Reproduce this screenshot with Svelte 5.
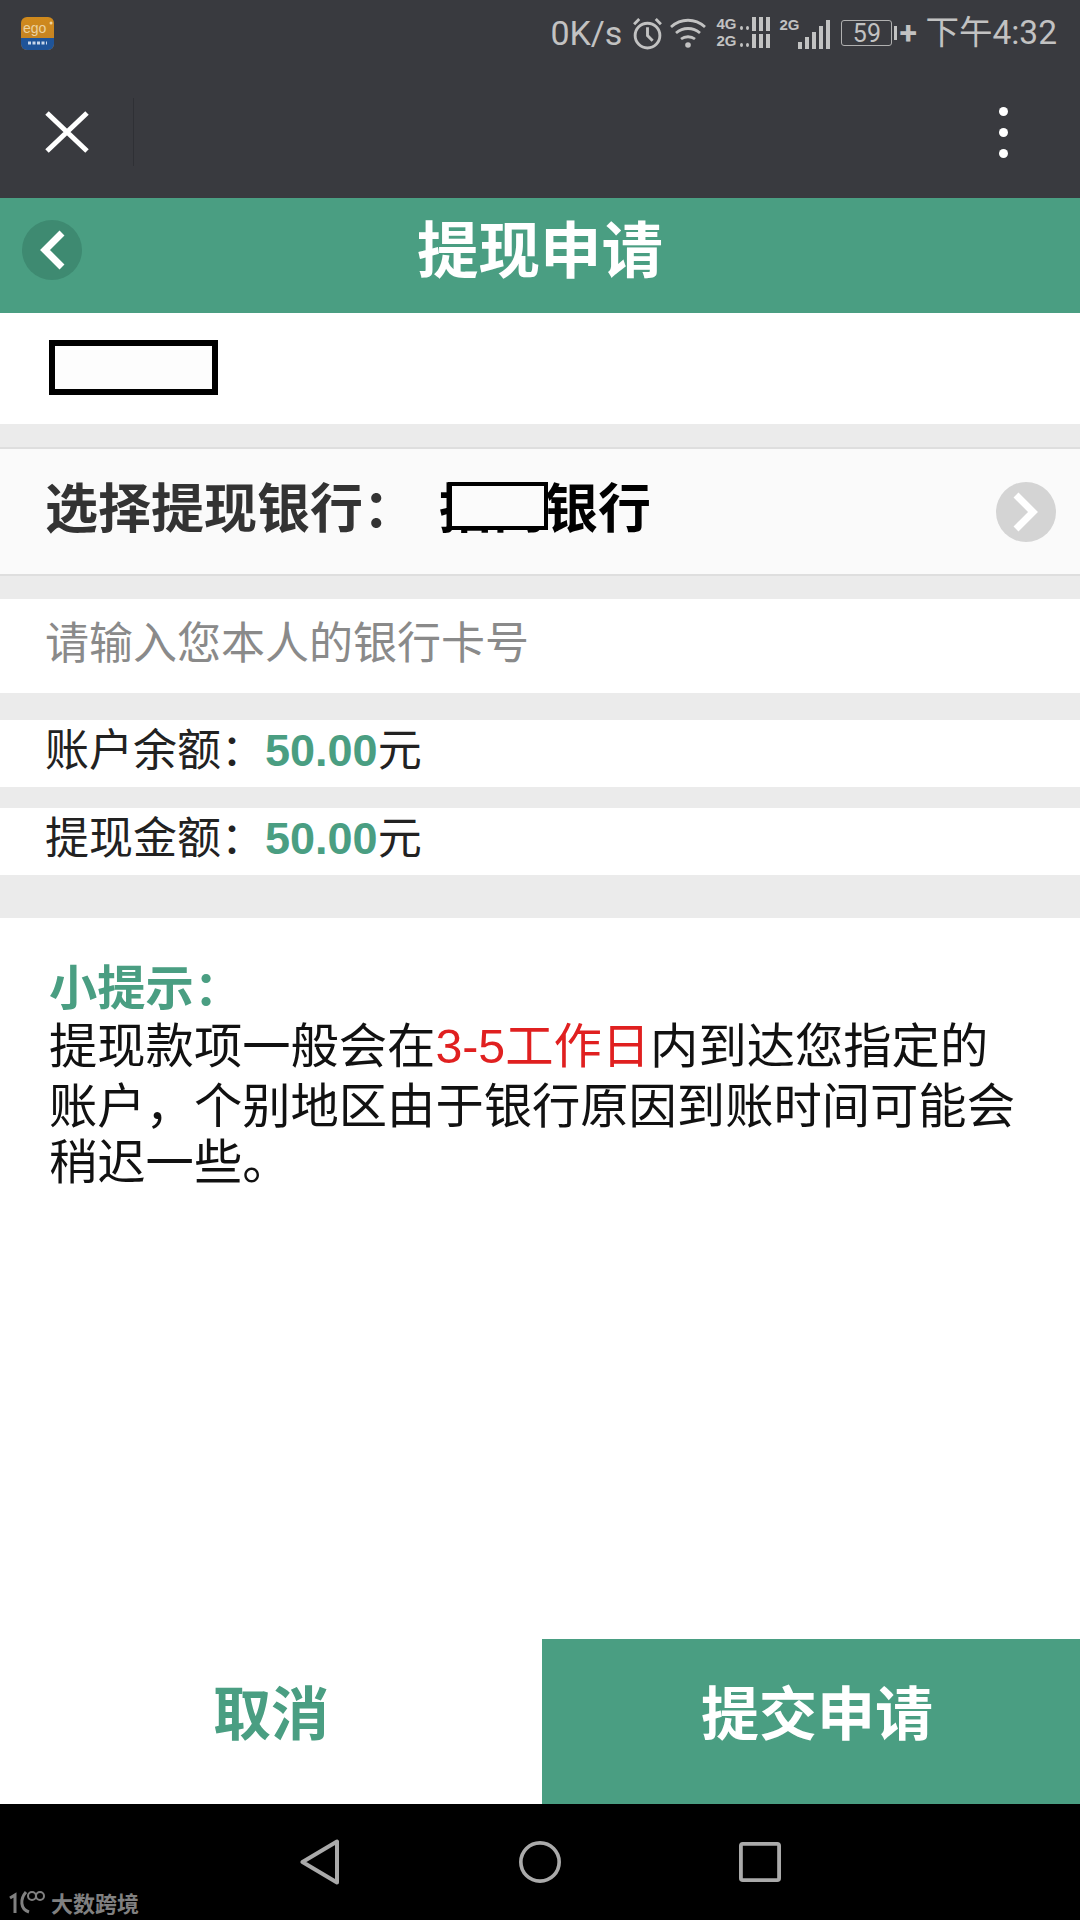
<script>
  const bars = [7, 12, 17, 23, 29];
</script>

<div class="page">
  <div class="top">
    <div class="status">
      <svg class="logo" viewBox="0 0 33 33">
        <defs>
          <linearGradient id="ego" x1="0" y1="0" x2="0" y2="1">
            <stop offset="0" stop-color="#d08a1c" />
            <stop offset="1" stop-color="#c08026" />
          </linearGradient>
        </defs>
        <rect width="33" height="33" rx="6" fill="url(#ego)" />
        <path d="M0 21h33v6a6 6 0 0 1-6 6H6a6 6 0 0 1-6-6z" fill="#1f5499" />
        <text x="2" y="16" font-size="14" fill="#ecd3a0" font-family="Liberation Sans">ego</text>
        <circle cx="30" cy="6" r="1.5" fill="#ecd3a0" />
        <path d="M7 26h19" stroke="#c8d6ea" stroke-width="3" stroke-dasharray="3 1.5" />
      </svg>
      <div class="spacer"></div>
      <span class="speed">0K/s</span>
      <svg class="ic clock" viewBox="0 0 30 32" fill="none" stroke="#c2c2c2" stroke-width="2.8">
        <circle cx="15" cy="18" r="12" />
        <path d="M15 10v8l5 5M2 7l5-5M28 7l-5-5" />
      </svg>
      <svg class="ic wifi" viewBox="0 0 36 30" fill="none" stroke="#c2c2c2" stroke-width="2.8">
        <path d="M1 9c10-9 24-9 34 0M6 15c7-6 17-6 24 0M11 21c4-3 10-3 14 0" />
        <circle cx="18" cy="27" r="2.8" fill="#c2c2c2" stroke="none" />
      </svg>
      <div class="dual">
        {#each ['4G', '2G'] as net}
          <div class="sim">
            <span>{net}</span>
            <i class="dot"></i><i class="dot"></i><b></b><b></b><b></b>
          </div>
        {/each}
      </div>
      <div class="single">
        <span>2G</span>
        <div class="bars">
          {#each bars as h}
            <i style="height: {h}px"></i>
          {/each}
        </div>
      </div>
      <div class="battery"><span>59</span></div>
      <i class="nub"></i>
      <span class="plus">+</span>
      <span class="time">下午4:32</span>
    </div>
    <div class="nav">
      <div class="close">
        <svg viewBox="0 0 44 42" stroke="#fff" stroke-width="5" fill="none">
          <path d="M2 2l40 38M42 2L2 40" />
        </svg>
      </div>
      <div class="divider"></div>
      <div class="spacer"></div>
      <div class="more"><i></i><i></i><i></i></div>
    </div>
  </div>

  <header class="title-bar">
    <button class="round back" aria-label="返回">
      <svg viewBox="0 0 28 40" fill="none" stroke="#fff" stroke-width="7">
        <path d="M24 3L7 20l17 17" />
      </svg>
    </button>
    <h1>提现申请</h1>
  </header>

  <div class="name-row"><div class="mask"></div></div>

  <div class="bank-row">
    <span class="label">选择提现银行：</span>
    <span class="bank">
      招商银行
      <i class="mask-bank"></i>
    </span>
    <div class="spacer"></div>
    <span class="round next">
      <svg viewBox="0 0 28 40" fill="none" stroke="#fff" stroke-width="7">
        <path d="M4 3l17 17L4 37" />
      </svg>
    </span>
  </div>

  <div class="card-row">请输入您本人的银行卡号</div>

  <div class="amount first">账户余额：<b>50.00</b>元</div>
  <div class="amount second">提现金额：<b>50.00</b>元</div>

  <div class="tips">
    <strong>小提示：</strong>
    <p>提现款项一般会在<em>3-5工作日</em>内到达您指定的<br />账户，个别地区由于银行原因到账时间可能会<br />稍迟一些。</p>
  </div>

  <div class="actions">
    <button class="cancel">取消</button>
    <button class="submit">提交申请</button>
  </div>

  <div class="softkeys">
    <svg class="key" viewBox="0 0 40 46" fill="none" stroke="#aaa" stroke-width="4" stroke-linejoin="round">
      <path d="M37 2.5v41L2.5 23z" />
    </svg>
    <svg class="key" viewBox="0 0 46 46" fill="none" stroke="#aaa" stroke-width="4">
      <circle cx="23" cy="23" r="21" />
    </svg>
    <svg class="key" viewBox="0 0 44 42" fill="none" stroke="#aaa" stroke-width="4">
      <rect x="2" y="2" width="40" height="38" rx="2" />
    </svg>
    <div class="watermark">
      <svg viewBox="0 0 38 26" fill="none" stroke="#808080" stroke-width="3">
        <path d="M2 9l5-3v18M18 3c-6 7-6 17 3 20" />
        <circle cx="24" cy="7" r="4" stroke-width="2" />
        <circle cx="32" cy="7" r="4" stroke-width="2" />
      </svg>
      <span>大数跨境</span>
    </div>
  </div>
</div>

<style>
  :global(body) {
    margin: 0;
    background: #fff;
  }

  .page {
    position: relative;
    width: 1080px;
    height: 1920px;
    display: flex;
    flex-direction: column;
    overflow: hidden;
    background: #ebebeb;
    font-family: "Noto Sans CJK SC", "Liberation Sans", sans-serif;
    color: #222;
  }

  .spacer {
    flex: 1;
  }

  .top {
    height: 198px;
    background: #393a3f;
  }

  .status {
    height: 66px;
    display: flex;
    align-items: center;
    padding: 0 23px 0 21px;
    color: #c2c2c2;
  }

  .logo {
    width: 33px;
    height: 33px;
  }

  .speed {
    font: 34px Roboto, sans-serif;
    width: 82px;
  }

  .ic {
    display: block;
  }

  .clock {
    width: 31px;
    height: 33px;
    margin-right: 7px;
  }

  .wifi {
    width: 36px;
    height: 30px;
    margin-right: 10px;
  }

  .dual {
    width: 54px;
    margin-right: 9px;
  }

  .sim {
    height: 16px;
    display: flex;
    align-items: center;
    gap: 3px;
    margin-bottom: 1px;
  }

  .sim span {
    font: bold 15px/16px "Liberation Sans", sans-serif;
    width: 21px;
  }

  .sim .dot {
    width: 3px;
    height: 4px;
    border-radius: 50%;
    background: #c2c2c2;
    margin-top: 8px;
  }

  .sim b {
    width: 4px;
    height: 14px;
    background: #c2c2c2;
  }

  .single {
    width: 51px;
    height: 32px;
    margin-right: 11px;
    position: relative;
    display: flex;
    justify-content: flex-end;
    align-items: flex-end;
  }

  .single span {
    position: absolute;
    left: 0;
    top: 0;
    font: bold 15px/16px "Liberation Sans", sans-serif;
  }

  .bars {
    display: flex;
    gap: 3px;
    align-items: flex-end;
  }

  .bars i {
    width: 4px;
    background: #c2c2c2;
  }

  .battery {
    width: 51px;
    height: 26px;
    box-sizing: border-box;
    border: 1px solid #b0b0b0;
    border-radius: 3px;
    display: flex;
    align-items: center;
    justify-content: center;
    font: 25px Roboto, sans-serif;
    margin-right: 2px;
  }

  .nub {
    width: 3px;
    height: 14px;
    background: #c2c2c2;
    margin-right: 2px;
  }

  .plus {
    font: bold 32px/32px Roboto, sans-serif;
    width: 20px;
    margin-right: 6px;
  }

  .time {
    font-family: Roboto, "Noto Sans CJK SC", sans-serif;
    font-size: 33.5px;
    line-height: 40px;
  }

  .nav {
    height: 132px;
    display: flex;
    align-items: center;
  }

  .close {
    width: 133px;
    padding-left: 45px;
    box-sizing: border-box;
  }

  .close svg {
    display: block;
    width: 44px;
    height: 42px;
  }

  .divider {
    width: 1px;
    height: 68px;
    background: #2f3035;
  }

  .more {
    display: flex;
    flex-direction: column;
    gap: 12px;
    margin-right: 72px;
  }

  .more i {
    width: 9px;
    height: 9px;
    border-radius: 50%;
    background: #fff;
  }

  .title-bar {
    height: 115px;
    background: #4a9e82;
    display: flex;
    align-items: center;
    justify-content: center;
    position: relative;
  }

  .title-bar h1 {
    margin: 0 0 18px;
    font-size: 61.5px;
    line-height: 80px;
    font-weight: 700;
    color: #fff;
  }

  .round {
    width: 60px;
    height: 60px;
    padding: 0;
    border: 0;
    border-radius: 50%;
    display: flex;
    align-items: center;
    justify-content: center;
  }

  .round svg {
    width: 28px;
    height: 40px;
  }

  .back {
    position: absolute;
    left: 22px;
    top: 22px;
    background: #3e8a71;
  }

  .name-row {
    height: 111px;
    padding: 27px 0 0 49px;
    box-sizing: border-box;
    background: #fff;
  }

  .mask {
    width: 169px;
    height: 55px;
    box-sizing: border-box;
    border: 6px solid #000;
    background: #fdfdfd;
  }

  .bank-row {
    height: 129px;
    box-sizing: border-box;
    margin-top: 23px;
    border-top: 2px solid #dedede;
    border-bottom: 2px solid #dedede;
    background: #fafafa;
    display: flex;
    align-items: center;
    padding: 0 24px 0 45px;
    font-size: 53px;
    line-height: 70px;
    font-weight: 700;
  }

  .label {
    color: #333;
    width: 394px;
    margin-bottom: 14px;
  }

  .bank {
    position: relative;
    color: #000;
    margin-bottom: 14px;
  }

  .mask-bank {
    position: absolute;
    left: 9px;
    top: 12px;
    width: 100px;
    height: 48px;
    box-sizing: border-box;
    border: 4px solid #000;
    background: #fbfbfb;
  }

  .next {
    background: #d4d4d4;
  }

  .card-row {
    height: 94px;
    margin-top: 23px;
    padding-left: 45px;
    background: #fff;
    font-size: 44px;
    line-height: 83px;
    color: #8a8a8a;
  }

  .amount {
    height: 67px;
    padding-left: 45px;
    background: #fff;
    font-size: 44px;
    line-height: 55px;
    color: #222;
  }

  .amount.first {
    margin-top: 27px;
  }

  .amount.second {
    margin-top: 21px;
  }

  .amount b {
    font-family: "Liberation Sans", sans-serif;
    font-size: 45px;
    color: #4a9e82;
  }

  .tips {
    flex: 1;
    margin-top: 43px;
    padding: 37px 49px 0;
    background: #fff;
    font-size: 48.3px;
    line-height: 58.5px;
    color: #111;
  }

  .tips strong {
    display: block;
    color: #4a9e82;
  }

  .tips p {
    margin: 0;
    line-height: 56px;
    white-space: nowrap;
  }

  .tips em {
    font-style: normal;
    color: #e02020;
    font-family: "Liberation Sans", "Noto Sans CJK SC", sans-serif;
  }

  .actions {
    height: 165px;
    display: flex;
  }

  .actions button {
    border: 0;
    padding: 0 0 24px;
    font-family: inherit;
    font-size: 58px;
    font-weight: 700;
  }

  .cancel {
    width: 542px;
    background: #fff;
    color: #4a9e82;
  }

  .actions .submit {
    flex: 1;
    padding-left: 12px;
    background: #4a9e82;
    color: #fff;
  }

  .softkeys {
    height: 116px;
    background: #000;
    position: relative;
    display: flex;
    align-items: center;
    justify-content: center;
    gap: 178px;
  }

  .key {
    width: 42px;
    height: 46px;
    margin-bottom: 1px;
  }

  .watermark {
    position: absolute;
    left: 8px;
    bottom: 5px;
    display: flex;
    align-items: center;
    gap: 5px;
    color: #808080;
    font-size: 22px;
    line-height: 26px;
    font-weight: 700;
  }

  .watermark svg {
    width: 38px;
    height: 26px;
  }
</style>
